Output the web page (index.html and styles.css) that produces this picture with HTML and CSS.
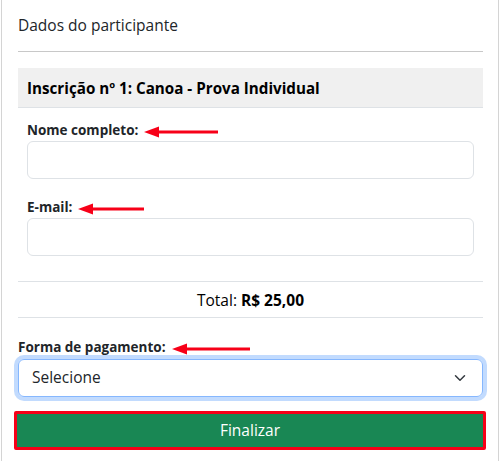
FILE: index.html
```html
<!DOCTYPE html>
<html lang="pt">
<head>
<meta charset="utf-8">
<title>Dados do participante</title>
<link rel="stylesheet" href="styles.css">
</head>
<body>
<div class="card">
  <div class="card-title">Dados do participante</div>
  <hr class="rule">
  <div class="item-head">Inscrição nº 1: Canoa - Prova Individual</div>
  <div class="item-body">
    <div class="field">
      <div class="label-row"><label class="label" for="nome">Nome completo:</label><svg class="arrow" viewBox="0 0 74 12" width="74" height="12"><line x1="12" y1="6" x2="74" y2="6" stroke="#f70018" stroke-width="3"/><polygon points="0,6 15,0.5 15,11.5" fill="#f70018"/></svg></div>
      <input class="control" id="nome" type="text">
    </div>
    <div class="field">
      <div class="label-row"><label class="label" for="email">E-mail:</label><svg class="arrow" viewBox="0 0 66 12" width="66" height="12"><line x1="12" y1="6" x2="66" y2="6" stroke="#f70018" stroke-width="3"/><polygon points="0,6 15,0.5 15,11.5" fill="#f70018"/></svg></div>
      <input class="control" id="email" type="text">
    </div>
  </div>
  <div class="total">Total: <b>R$ 25,00</b></div>
  <div class="pay">
    <div class="label-row pay-label"><label class="label" for="pag">Forma de pagamento:</label><svg class="arrow" viewBox="0 0 78 12" width="78" height="12"><line x1="12" y1="6" x2="78" y2="6" stroke="#f70018" stroke-width="3"/><polygon points="0,6 15,0.5 15,11.5" fill="#f70018"/></svg></div>
    <div class="select" id="pag">
      <span>Selecione</span>
      <svg class="chev" viewBox="0 0 16 16" width="12" height="12"><path d="M2 5l6 6 6-6" fill="none" stroke="#343a40" stroke-width="2" stroke-linecap="round" stroke-linejoin="round"/></svg>
    </div>
    <button class="btn" type="button">Finalizar</button>
  </div>
</div>
</body>
</html>
```
FILE: styles.css
```css
html, body {
  margin: 0;
  padding: 0;
  background: #fff;
}
body {
  font-family: "Segoe UI", "Open Sans", "Noto Sans", sans-serif;
  color: #212529;
  font-size: 15.5px;
  line-height: 1.5;
}
.card {
  margin-left: 1px;
  width: 498px;
  box-sizing: border-box;
  border-left: 1px solid #d4d4d4;
  border-right: 1px solid #d4d4d4;
  padding: 13px 15px 0 16px;
  min-height: 461px;
}
.card-title {
  font-size: 15.5px;
  line-height: 24px;
  color: #212529;
}
.rule {
  margin: 14px 0 16px;
  border: 0;
  border-top: 1px solid #c8c8c8;
  height: 0;
}
.item-head {
  background: #f0f0f0;
  border-bottom: 1px solid #dee2e6;
  height: 39px;
  padding: 0 9px;
  font-weight: 700;
  font-size: 15.2px;
  line-height: 40px;
  color: #000;
}
.item-body {
  padding: 12px 9px 0;
}
.field + .field {
  margin-top: 18px;
}
.label-row {
  display: flex;
  align-items: center;
  height: 21px;
}
.pay-label {
  margin-bottom: 1px;
}
.label {
  font-weight: 700;
  font-size: 13.5px;
  line-height: 21px;
  color: #212529;
}
.arrow {
  margin-left: 6px;
  margin-top: 3px;
  flex: none;
}
.control {
  display: block;
  width: 100%;
  box-sizing: border-box;
  height: 38px;
  margin: 0;
  border: 1px solid #dee2e6;
  border-radius: 6px;
  background: #fff;
  font: inherit;
  padding: 6px 12px;
}
.total {
  margin-top: 25px;
  border-top: 1px solid #dee2e6;
  border-bottom: 1px solid #dee2e6;
  padding: 6px 0 5px;
  text-align: center;
  font-size: 15.5px;
  line-height: 24px;
  color: #000;
}
.total b {
  font-weight: 700;
}
.pay {
  padding-top: 19px;
}
.select {
  display: flex;
  align-items: center;
  justify-content: space-between;
  box-sizing: border-box;
  height: 38px;
  border: 1px solid #86b7fe;
  border-radius: 6px;
  box-shadow: 0 0 0 4px rgba(13, 110, 253, 0.25);
  padding: 0 16px 0 13px;
  font-size: 15.5px;
  color: #212529;
}
.chev {
  display: block;
}
.btn {
  display: block;
  margin: 14px 0 0 -4px;
  width: 472px;
  height: 39px;
  box-sizing: border-box;
  border: 3px solid #f70018;
  border-radius: 2px;
  background: #198754;
  color: #fff;
  font: inherit;
  font-size: 15.5px;
  padding: 0;
}
```
